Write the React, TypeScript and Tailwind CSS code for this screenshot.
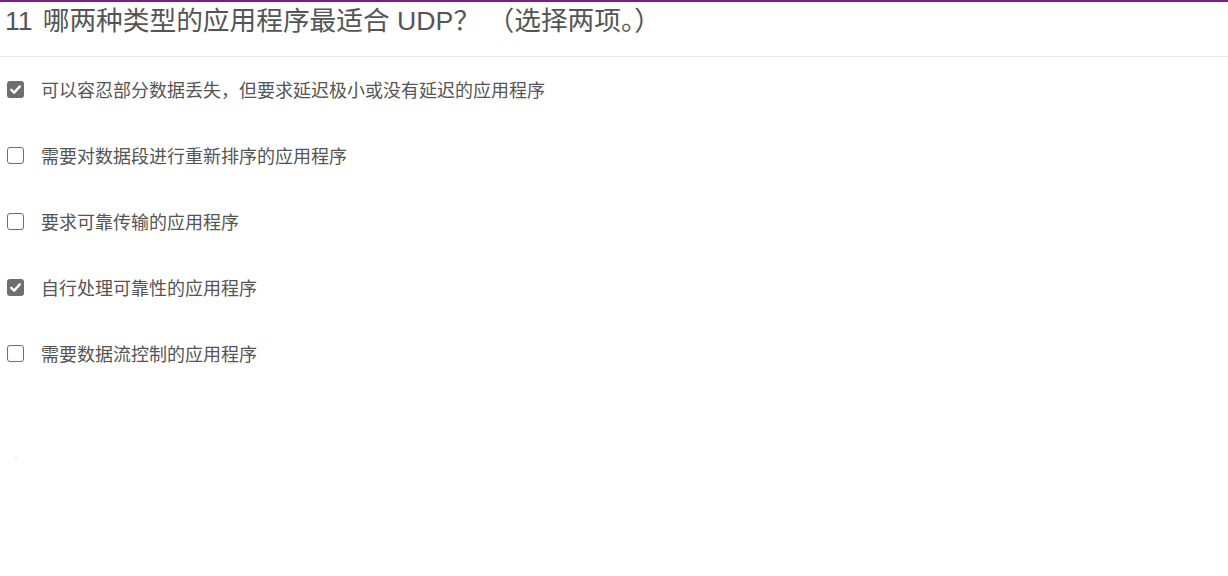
import React from "react";

const options = [
  { text: "可以容忍部分数据丢失，但要求延迟极小或没有延迟的应用程序", checked: true },
  { text: "需要对数据段进行重新排序的应用程序", checked: false },
  { text: "要求可靠传输的应用程序", checked: false },
  { text: "自行处理可靠性的应用程序", checked: true },
  { text: "需要数据流控制的应用程序", checked: false },
];

function Box({ checked }: { checked: boolean }) {
  if (checked) {
    return (
      <div className="w-[17px] h-[17px] mb-[3px] rounded-[3px] bg-[#6e6e6e] flex items-center justify-center shrink-0">
        <svg width="13" height="13" viewBox="0 0 13 13">
          <path d="M2.3 6.8 L5.2 9.6 L10.8 3.4" fill="none" stroke="#fff" strokeWidth="2.4" strokeLinecap="round" strokeLinejoin="round" />
        </svg>
      </div>
    );
  }
  return <div className="w-[17px] h-[17px] mb-[3px] rounded-[3px] border-[1.5px] border-[#6e6e6e] bg-white shrink-0" />;
}

export default function App() {
  return (
    <div
      className="w-[1228px] h-[576px] bg-white border-t-2 border-[#7a1e86] relative overflow-hidden"
      style={{ fontFamily: '"Liberation Sans", "Noto Sans CJK SC", sans-serif' }}
    >
      <div className="h-[55px] border-b border-[#ebebeb] pl-[5px] pt-[1px]">
        <div className="text-[26.7px] leading-[37px] text-[#555555] flex">
          <span>11</span>
          <span className="ml-[10px]">哪两种类型的应用程序最适合 UDP？ （选择两项。）</span>
        </div>
      </div>
      <div className="flex flex-col pt-[1px]">
        {options.map((o, i) => (
          <div key={i} className="h-[66px] flex items-center pl-[7px] gap-[17px]">
            <Box checked={o.checked} />
            <span className="text-[18px] leading-[24px] text-[#555555]">{o.text}</span>
          </div>
        ))}
      </div>
      <div className="absolute left-[15px] top-[456px] w-[2px] h-[1px] bg-[#d8d8d8]" />
    </div>
  );
}
